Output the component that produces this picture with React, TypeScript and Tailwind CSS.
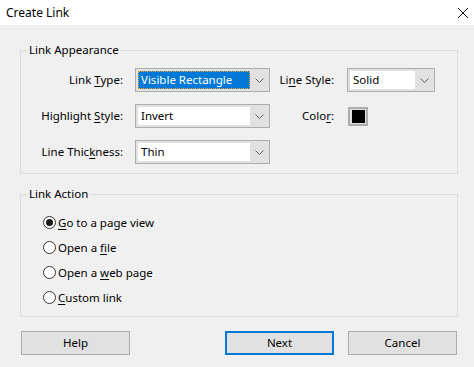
import React from 'react';

const font = { fontFamily: '"Noto Sans", "Liberation Sans", sans-serif' };

const Chevron = () => (
  <svg width="9" height="5" viewBox="0 0 9 5" className="text-[#606060]">
    <path d="M0.5 0.5 L4.5 4.5 L8.5 0.5" fill="none" stroke="currentColor" strokeWidth="1" />
  </svg>
);

const Combo = ({ value, width, selected }: any) => (
  <div className={`flex h-[24px] border border-[#adadad] bg-[#e1e1e1] ${width}`}>
    <div className="flex-1 p-[2px] pr-0">
      {selected ? (
        <div className="h-full bg-[#0078d7] text-white border border-dotted border-[#f5a623] flex items-center pl-[2px] leading-none">{value}</div>
      ) : (
        <div className="h-full bg-white flex items-center pl-[3px] leading-none">{value}</div>
      )}
    </div>
    <div className="w-[19px] flex items-center justify-center"><Chevron /></div>
  </div>
);

const Label = ({ pre, u, post }: any) => (
  <span>{pre}<span className="underline underline-offset-2">{u}</span>{post}</span>
);

const Radio = ({ checked, pre, u, post }: any) => (
  <div className="flex items-center h-[25px]">
    <div className="w-[13px] h-[13px] rounded-full border border-[#333] bg-white flex items-center justify-center mr-[2px]">
      {checked && <div className="w-[7px] h-[7px] rounded-full bg-[#1a1a1a]" />}
    </div>
    <Label pre={pre} u={u} post={post} />
  </div>
);

export default function App() {
  return (
    <div className="w-[474px] h-[367px] bg-[#f0f0f0] text-[11.5px] text-black flex flex-col overflow-hidden" style={font}>
      <div className="h-[25px] bg-white flex items-center justify-between pl-[6px] pr-[4px]">
        <span className="text-[12px]">Create Link</span>
        <svg width="12" height="12" viewBox="0 0 12 12" className="mr-[1px]">
          <path d="M1 1 L11 11 M11 1 L1 11" stroke="#111" strokeWidth="1" />
        </svg>
      </div>

      <div className="pl-[20px] pr-[16px] pt-[17px]">
        <fieldset className="border border-[#dcdcdc] pb-[9px]">
          <legend className="ml-[6px] px-[2px] leading-[16px]">Link Appearance</legend>
          <div className="grid grid-cols-[114px_135px_77px_88px] gap-y-[12px] items-center pt-[10px]">
            <div className="text-right pr-[12px]"><Label pre="Link " u="T" post="ype:" /></div>
            <Combo value="Visible Rectangle" width="w-[135px]" selected />
            <div className="text-right pr-[13px]"><Label pre="Li" u="n" post="e Style:" /></div>
            <Combo value="Solid" width="w-[88px]" />

            <div className="text-right pr-[12px]"><Label pre="Highlight " u="S" post="tyle:" /></div>
            <Combo value="Invert" width="w-[135px]" />
            <div className="text-right pr-[13px]"><Label pre="Colo" u="r" post=":" /></div>
            <div className="ml-[1px] w-[20px] h-[19px] border-2 border-[#adadad] bg-[#e1e1e1] flex items-center justify-center">
              <div className="w-[13px] h-[13px] bg-black" />
            </div>

            <div className="text-right pr-[12px]"><Label pre="Line Thic" u="k" post="ness:" /></div>
            <Combo value="Thin" width="w-[135px]" />
            <div />
            <div />
          </div>
        </fieldset>

        <fieldset className="border border-[#dcdcdc] mt-[12px] pb-[6px] pl-[22px]">
          <legend className="ml-[-16px] px-[2px] leading-[16px]">Link Action</legend>
          <div className="pt-[8px] flex flex-col">
            <Radio checked pre="" u="G" post="o to a page view" />
            <Radio pre="Open a " u="f" post="ile" />
            <Radio pre="Open a " u="w" post="eb page" />
            <Radio pre="" u="C" post="ustom link" />
          </div>
        </fieldset>

        <div className="flex justify-between mt-[14px] pl-[1px] pr-[1px]">
          <button className="w-[109px] h-[24px] border border-[#adadad] bg-[#e1e1e1]">Help</button>
          <div className="flex gap-[14px]">
            <button className="w-[109px] h-[24px] border-2 border-[#0078d7] bg-[#e1e1e1]">Next</button>
            <button className="w-[109px] h-[24px] border border-[#adadad] bg-[#e1e1e1]">Cancel</button>
          </div>
        </div>
      </div>
    </div>
  );
}
